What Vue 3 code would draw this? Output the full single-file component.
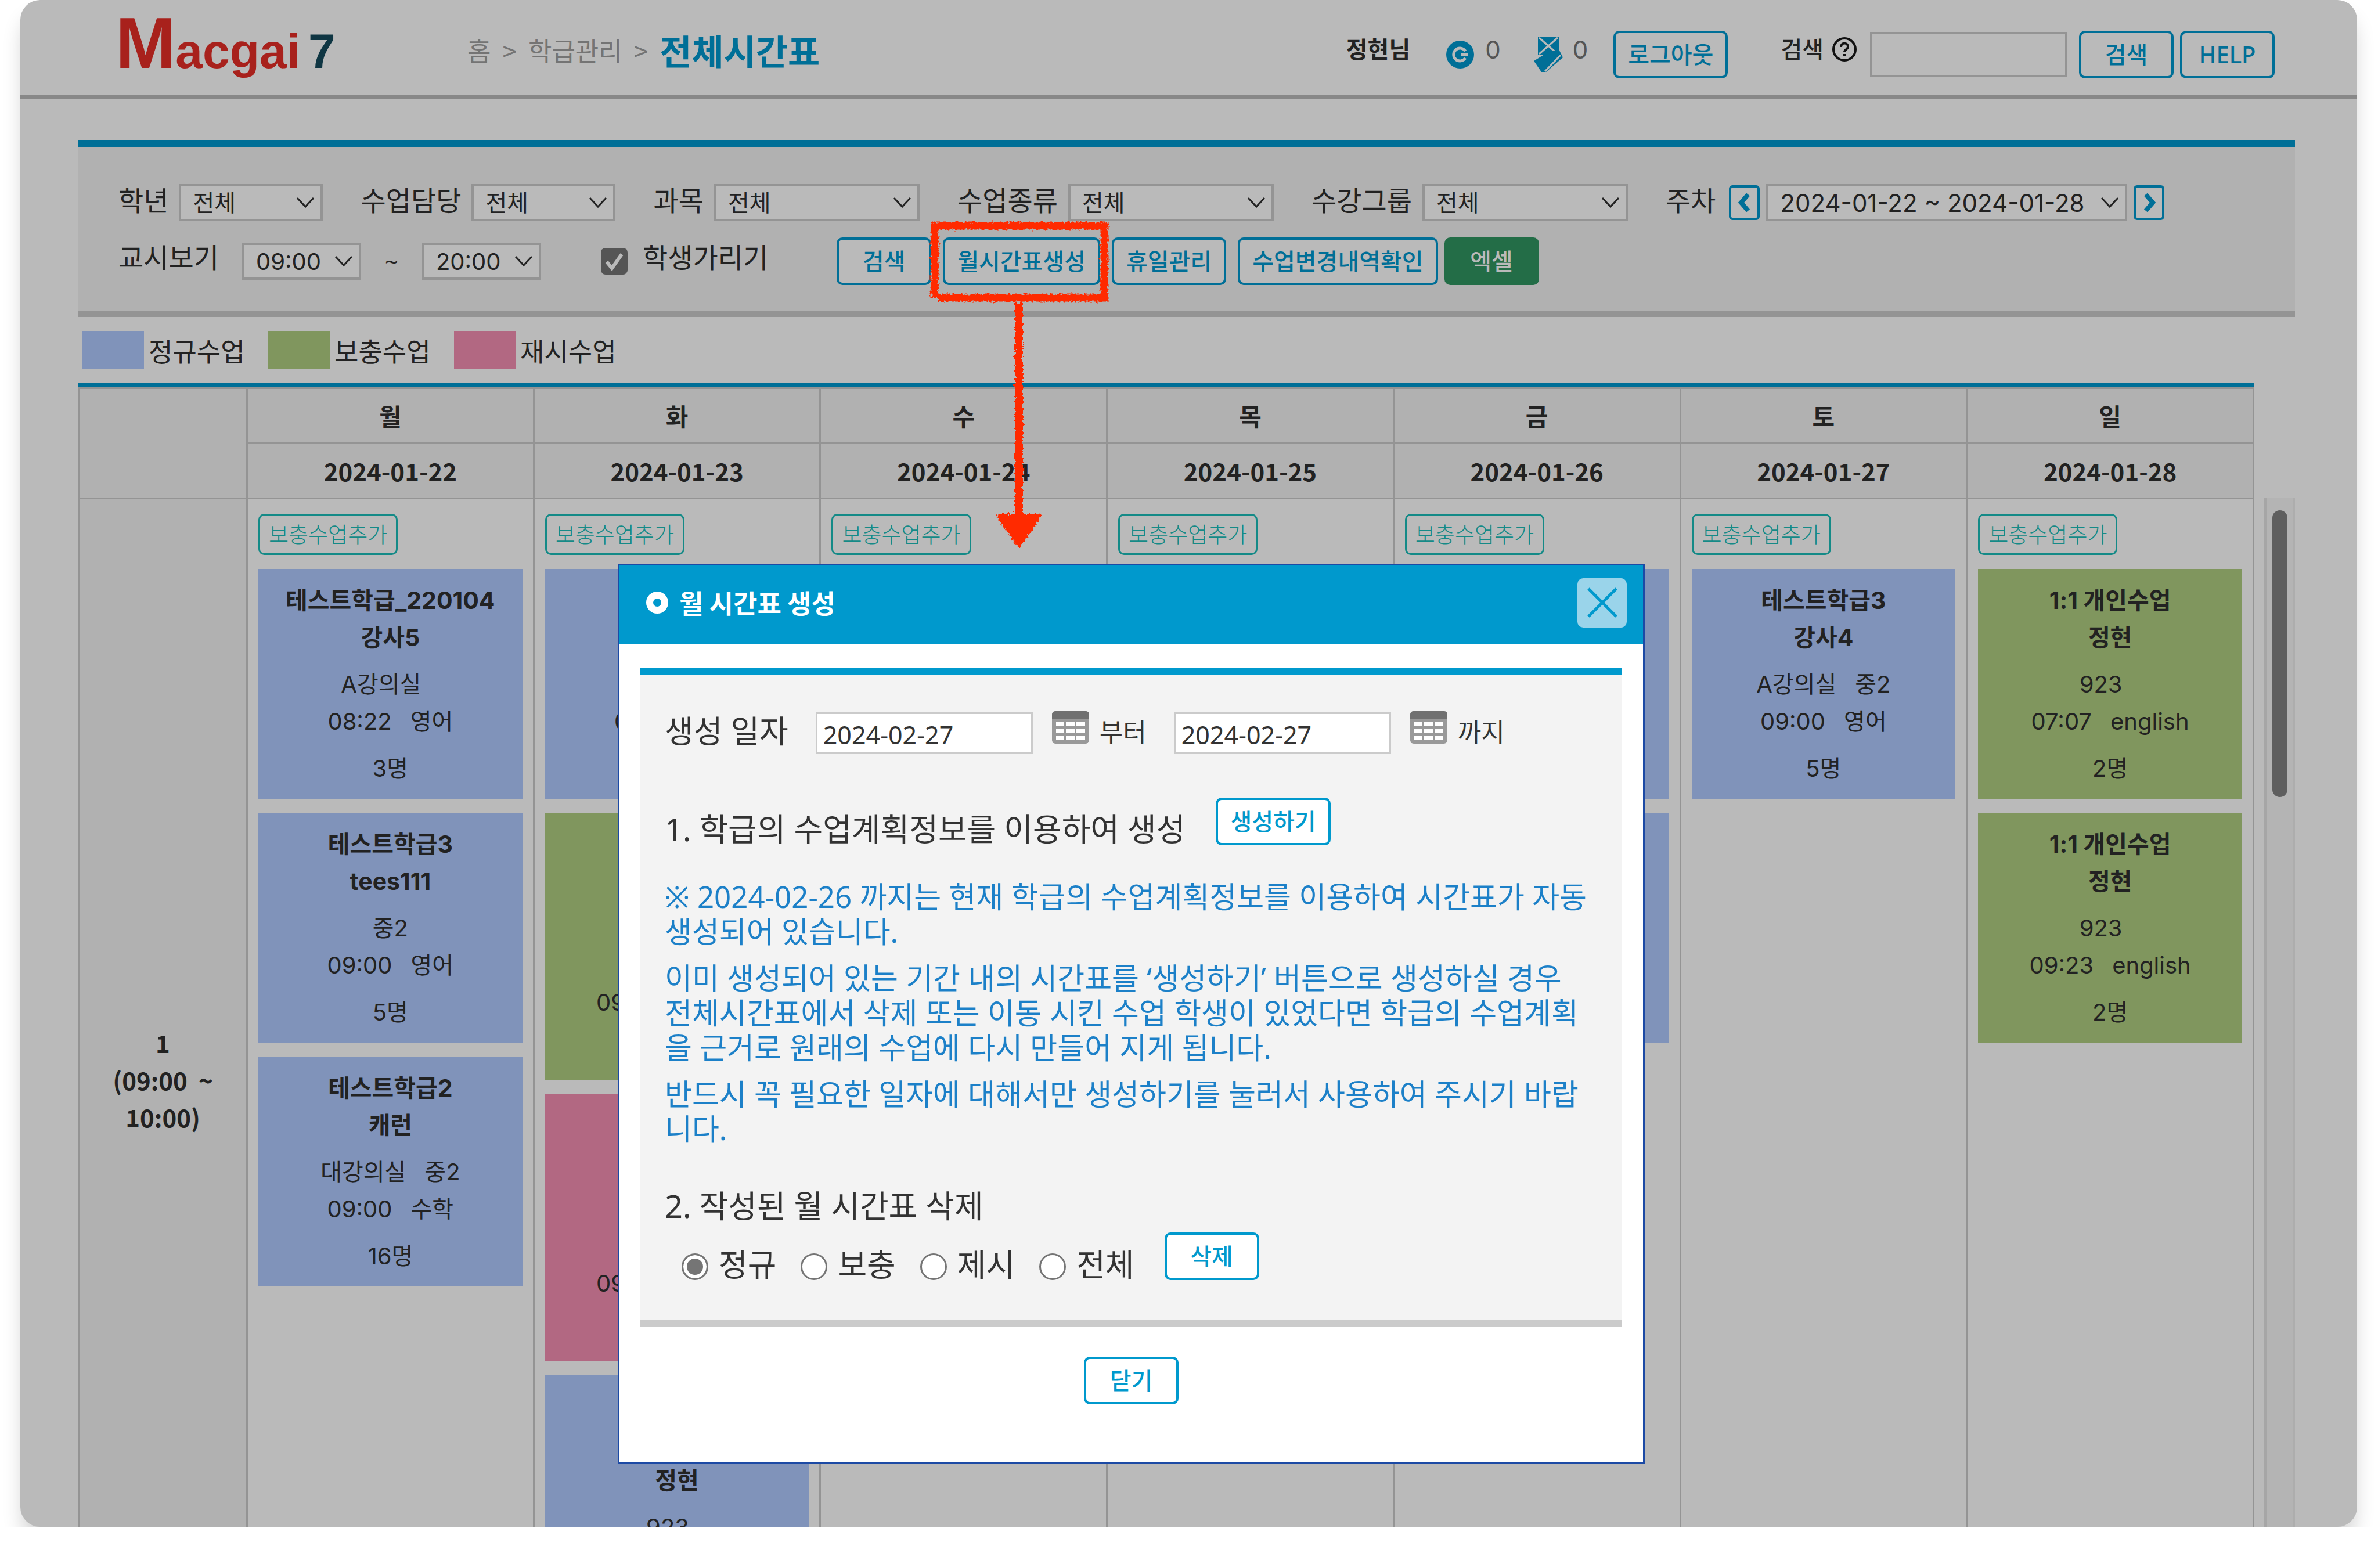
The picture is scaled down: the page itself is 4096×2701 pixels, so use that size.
<script setup>
import { ref } from 'vue'

const selects = [
  { id: 'grade', label: '학년', size: 'narrow' },
  { id: 'teacher', label: '수업담당', size: 'narrow' },
  { id: 'subject', label: '과목', size: 'wide' },
  { id: 'kind', label: '수업종류', size: 'wide' },
  { id: 'group', label: '수강그룹', size: 'wide' },
]

const hideStudents = ref(true)
const fromDate = ref('2024-02-27')
const toDate = ref('2024-02-27')
const removeType = ref('정규')
const removeTypes = ['정규', '보충', '제시', '전체']

const legend = [
  { name: '정규수업', tone: 'regular' },
  { name: '보충수업', tone: 'extra' },
  { name: '재시수업', tone: 'retest' },
]

const lesson = (tone, title, room, grade, time, subject, count) => ({ tone, title, room, grade, time, subject, count })

const days = [
  {
    name: '월',
    date: '2024-01-22',
    lessons: [
      lesson('regular', ['테스트학급_220104', '강사5'], 'A강의실', '', '08:22', '영어', '3명'),
      lesson('regular', ['테스트학급3', 'tees111'], '중2', null, '09:00', '영어', '5명'),
      lesson('regular', ['테스트학급2', '캐런'], '대강의실', '중2', '09:00', '수학', '16명'),
    ],
  },
  {
    name: '화',
    date: '2024-01-23',
    lessons: [
      lesson('regular', ['학급5', '강사5'], '중2', null, '08:22', '영어', '3명'),
      lesson('extra', ['개인', '수업', '정현'], '923', '', '09:23', 'english', '2명'),
      lesson('retest', ['개인', '수업', '정현'], '923', '', '09:23', 'english', '2명'),
      lesson('regular', ['개인', '수업', '정현'], '923', '', '09:23', 'english', '2명'),
    ],
  },
  { name: '수', date: '2024-01-24', lessons: [] },
  { name: '목', date: '2024-01-25', lessons: [] },
  {
    name: '금',
    date: '2024-01-26',
    lessons: [
      lesson('regular', ['학급3', '강사4'], '중2', null, '09:00', '영어', '5명'),
      lesson('regular', ['학급2', '캐런'], '중2', null, '09:00', '수학', '5명'),
    ],
  },
  {
    name: '토',
    date: '2024-01-27',
    lessons: [lesson('regular', ['테스트학급3', '강사4'], 'A강의실', '중2', '09:00', '영어', '5명')],
  },
  {
    name: '일',
    date: '2024-01-28',
    lessons: [
      lesson('extra', ['1:1 개인수업', '정현'], '923', '', '07:07', 'english', '2명'),
      lesson('extra', ['1:1 개인수업', '정현'], '923', '', '09:23', 'english', '2명'),
    ],
  },
]
</script>

<template>
  <div class="frame">
    <header class="top">
      <a class="logo" href="#"><span class="logo-m">M</span><span class="logo-rest">acgai</span><span class="logo-num">7</span></a>
      <nav class="crumbs">
        <a href="#">홈</a><span>&gt;</span><a href="#">학급관리</a><span>&gt;</span>
        <h1>전체시간표</h1>
      </nav>
      <div class="account">
        <strong class="user">정현님</strong>
        <span class="coin">
          <svg width="50" height="50" viewBox="0 0 50 50">
            <circle cx="25" cy="25" r="24" fill="#006f97" />
            <path d="M34 19a11 11 0 1 0 0 12" fill="none" stroke="#bababa" stroke-width="5" />
            <path d="M27 25h11" stroke="#bababa" stroke-width="4" />
          </svg>
          <span>0</span>
        </span>
        <span class="coin pen">
          <svg width="52" height="62" viewBox="0 0 52 62">
            <path d="M8 1h36v30H8z" fill="#006f97" />
            <path d="M10 2l32 28M42 2L10 30" stroke="#bababa" stroke-width="3" />
            <path d="M1 42L30 24h15l6 12L22 61h-8z" fill="#006f97" />
            <path d="M20 60L47 32" stroke="#bababa" stroke-width="3" />
          </svg>
          <span>0</span>
        </span>
        <button class="btn" type="button">로그아웃</button>
        <label class="find" for="find">검색
          <svg width="44" height="44" viewBox="0 0 44 44" fill="none" stroke="#111" stroke-width="4">
            <circle cx="22" cy="22" r="19" />
            <path d="M16 18c0-9 13-8 12 0-1 5-6 4-6 9" />
            <path d="M22 30v4" />
          </svg>
        </label>
        <input id="find" class="find-box" type="text" />
        <button class="btn square" type="button">검색</button>
        <button class="btn square help" type="button">HELP</button>
      </div>
    </header>

    <main class="content">
      <form class="filters" @submit.prevent>
        <div class="row first">
          <div v-for="s in selects" :key="s.id" class="field">
            <label :for="s.id">{{ s.label }}</label>
            <span class="pick" :class="s.size">
              <select :id="s.id"><option>전체</option></select>
              <svg viewBox="0 0 32 20"><path d="M2 2l14 15L30 2" /></svg>
            </span>
          </div>
          <div class="field week">
            <label for="week">주차</label>
            <button class="step" type="button" aria-label="이전 주">
              <svg viewBox="0 0 24 36"><path d="M18 4L6 18l12 14" /></svg>
            </button>
            <span class="pick range">
              <select id="week"><option>2024-01-22 ~ 2024-01-28</option></select>
              <svg viewBox="0 0 32 20"><path d="M2 2l14 15L30 2" /></svg>
            </span>
            <button class="step" type="button" aria-label="다음 주">
              <svg viewBox="0 0 24 36"><path d="M6 4l12 14L6 32" /></svg>
            </button>
          </div>
        </div>
        <div class="row second">
          <label class="period" for="from">교시보기</label>
          <span class="pick hour">
            <select id="from"><option>09:00</option></select>
            <svg viewBox="0 0 32 20"><path d="M2 2l14 15L30 2" /></svg>
          </span>
          <span class="tilde">~</span>
          <span class="pick hour">
            <select id="to" aria-label="종료 교시"><option>20:00</option></select>
            <svg viewBox="0 0 32 20"><path d="M2 2l14 15L30 2" /></svg>
          </span>
          <span class="tick">
            <input id="hide" v-model="hideStudents" type="checkbox" />
            <svg viewBox="0 0 46 46"><path d="M10 24l9 11L36 11" /></svg>
          </span>
          <label class="hide-label" for="hide">학생가리기</label>
          <div class="actions">
            <button class="btn square" type="button">검색</button>
            <span class="marked">
              <button class="btn" type="button">월시간표생성</button>
              <svg class="marker" width="320" height="570" viewBox="0 0 320 570">
                <filter id="crayon" x="-10%" y="-5%" width="120%" height="110%">
                  <feTurbulence type="fractalNoise" baseFrequency="0.22" numOctaves="3" seed="4" />
                  <feDisplacementMap in="SourceGraphic" scale="9" xChannelSelector="R" yChannelSelector="G" />
                </filter>
                <g filter="url(#crayon)" fill="none" stroke="#ff2b00">
                  <path d="M15 138V14H307V138H20" stroke-width="13" />
                  <path d="M160 147V520" stroke-width="14" />
                  <path d="M126 514h68l-34 50z" fill="#ff2b00" stroke-width="8" stroke-linejoin="round" />
                </g>
              </svg>
            </span>
            <button class="btn" type="button">휴일관리</button>
            <button class="btn" type="button">수업변경내역확인</button>
            <button class="btn square excel" type="button">엑셀</button>
          </div>
        </div>
      </form>

      <ul class="legend">
        <li v-for="l in legend" :key="l.name"><i :class="l.tone"></i>{{ l.name }}</li>
      </ul>

      <div class="board">
        <div class="sheet">
          <table>
            <colgroup>
              <col class="time-col" />
              <col v-for="d in days" :key="d.name" />
            </colgroup>
            <thead>
              <tr>
                <th rowspan="2"></th>
                <th v-for="d in days" :key="d.name">{{ d.name }}</th>
              </tr>
              <tr>
                <th v-for="d in days" :key="d.date">{{ d.date }}</th>
              </tr>
            </thead>
            <tbody>
              <tr>
                <th class="time">1<br />(09:00 &nbsp;~<br />10:00)</th>
                <td v-for="d in days" :key="d.name">
                  <button class="add" type="button">보충수업추가</button>
                  <article v-for="(c, i) in d.lessons" :key="i" class="card" :class="c.tone">
                    <h3><span v-for="t in c.title" :key="t">{{ t }}</span></h3>
                    <p><span>{{ c.room }}</span><span v-if="c.grade !== null">{{ c.grade }}</span></p>
                    <p><span>{{ c.time }}</span><span>{{ c.subject }}</span></p>
                    <p class="count">{{ c.count }}</p>
                  </article>
                </td>
              </tr>
            </tbody>
          </table>
        </div>
        <div class="scroll"><div class="track"><div class="thumb"></div></div></div>
      </div>
    </main>

    <section class="modal" role="dialog" aria-labelledby="modal-title">
      <header class="modal-head">
        <i class="dot"></i>
        <h2 id="modal-title">월 시간표 생성</h2>
        <button class="close" type="button" aria-label="닫기">
          <svg width="52" height="52" viewBox="0 0 52 52"><path d="M2 2l48 48M50 2L2 50" /></svg>
        </button>
      </header>
      <div class="panel">
        <div class="dates">
          <label class="big" for="date-from">생성 일자</label>
          <input id="date-from" v-model="fromDate" type="text" />
          <svg class="cal" width="64" height="58" viewBox="0 0 64 58">
            <rect x="0" y="1" width="64" height="56" rx="6" fill="#999" />
            <path d="M0 14V7q0-6 6-6h52q6 0 6 6v7z" fill="#707070" />
            <path d="M7 20h14v7H7zM24 20h15v7H24zM42 20h15v7H42zM7 31h14v8H7zM24 31h15v8H24zM42 31h15v8H42zM7 43h14v8H7zM24 43h15v8H24zM42 43h15v8H42z" fill="#fff" />
          </svg>
          <span class="word">부터</span>
          <input v-model="toDate" type="text" aria-label="종료 일자" />
          <svg class="cal" width="64" height="58" viewBox="0 0 64 58">
            <rect x="0" y="1" width="64" height="56" rx="6" fill="#999" />
            <path d="M0 14V7q0-6 6-6h52q6 0 6 6v7z" fill="#707070" />
            <path d="M7 20h14v7H7zM24 20h15v7H24zM42 20h15v7H42zM7 31h14v8H7zM24 31h15v8H24zM42 31h15v8H42zM7 43h14v8H7zM24 43h15v8H24zM42 43h15v8H42z" fill="#fff" />
          </svg>
          <span class="word">까지</span>
        </div>
        <div class="make">
          <h3>1. 학급의 수업계획정보를 이용하여 생성</h3>
          <button class="btn bright" type="button">생성하기</button>
        </div>
        <div class="notes">
          <p>※ 2024-02-26 까지는 현재 학급의 수업계획정보를 이용하여 시간표가 자동<br />생성되어 있습니다.</p>
          <p>이미 생성되어 있는 기간 내의 시간표를 ‘생성하기’ 버튼으로 생성하실 경우<br />전체시간표에서 삭제 또는 이동 시킨 수업 학생이 있었다면 학급의 수업계획<br />을 근거로 원래의 수업에 다시 만들어 지게 됩니다.</p>
          <p>반드시 꼭 필요한 일자에 대해서만 생성하기를 눌러서 사용하여 주시기 바랍<br />니다.</p>
        </div>
        <h3 class="second-title">2. 작성된 월 시간표 삭제</h3>
        <div class="remove">
          <label v-for="t in removeTypes" :key="t">
            <input v-model="removeType" type="radio" name="remove" :value="t" />{{ t }}
          </label>
          <button class="btn square bright" type="button">삭제</button>
        </div>
      </div>
      <footer class="modal-foot"><button class="btn square bright" type="button">닫기</button></footer>
    </section>
  </div>
</template>

<style>
body {
  background: #fff;
}
</style>

<style scoped>
* {
  box-sizing: border-box;
  margin: 0;
  padding: 0;
}
.frame {
  position: relative;
  height: calc(100vh - 71px);
  margin: 0 36px 0 35px;
  overflow: hidden;
  border-radius: 34px;
  background: #bababa;
  box-shadow: 0 26px 36px -6px rgba(0, 0, 0, 0.2);
  color: #222;
  font-family: "Noto Sans", "Noto Sans CJK KR", sans-serif;
  font-size: 40px;
}
button,
input,
select {
  font: inherit;
  color: inherit;
}
a {
  color: inherit;
  text-decoration: none;
}

/* header */
.top {
  display: flex;
  align-items: center;
  height: 171px;
  padding: 25px 142px 0 164px;
  border-bottom: 8px solid #888;
}
.logo {
  flex: 0 0 606px;
  display: flex;
  align-items: baseline;
  margin-top: -27px;
  color: #a8211c;
  font-family: "Liberation Sans", sans-serif;
  font-weight: 700;
  line-height: 100px;
}
.logo-m {
  font-size: 124px;
}
.logo-rest,
.logo-num {
  font-size: 84px;
}
.logo-num {
  margin-left: 14px;
  color: #0f3643;
}
.crumbs {
  display: flex;
  align-items: center;
  gap: 20px;
  margin-bottom: 16px;
  color: #747474;
  font-family: "Noto Sans CJK KR", sans-serif;
  font-size: 44px;
  font-weight: 400;
  line-height: 60px;
}
.crumbs h1 {
  color: #006f97;
  font-size: 60px;
  font-weight: 700;
}
.account {
  display: flex;
  align-items: center;
  margin-left: auto;
}
.user,
.find {
  font-weight: 700;
  line-height: 48px;
  margin-bottom: 18px;
}
.user {
  margin-right: 61px;
}
.find {
  font-weight: 500;
}
.coin {
  display: flex;
  align-items: center;
  gap: 18px;
  margin-right: 56px;
}
.coin span {
  margin-bottom: 18px;
  color: #555;
  font-family: Inter, sans-serif;
  font-size: 42px;
}
.coin.pen {
  gap: 16px;
  margin-right: 44px;
}
.btn {
  flex: none;
  height: 82px;
  padding: 0 21px;
  border: 4px solid #006f97;
  border-radius: 10px;
  background: #bababa;
  color: #006f97;
  font-weight: 500;
  line-height: 48px;
  white-space: nowrap;
}
.btn.square {
  width: 163px;
  padding: 0;
}
.find {
  display: flex;
  align-items: center;
  gap: 14px;
  margin-left: 91px;
}
.find-box {
  width: 340px;
  height: 78px;
  margin: 0 20px 0 22px;
  border: 4px solid #949494;
  background: transparent;
}
.btn.help {
  margin-left: 11px;
}

/* filters */
.content {
  padding: 71px 107px 0 99px;
}
.filters {
  padding: 64px 68px 44px 70px;
  border-top: 11px solid #006f97;
  border-bottom: 11px solid #949494;
  background: #b1b1b1;
}
.row {
  display: flex;
  align-items: center;
}
.row label {
  font-size: 47px;
  line-height: 56px;
}
.first {
  gap: 65px;
}
.field {
  display: flex;
  align-items: center;
  gap: 18px;
}
.field > label {
  margin-bottom: 8px;
}
.field.week {
  gap: 11px;
}
.week > label {
  margin-right: 12px;
}
.pick {
  position: relative;
  display: block;
  height: 64px;
}
.pick select {
  width: 100%;
  height: 100%;
  padding: 0 20px;
  border: 4px solid #949494;
  border-radius: 0;
  background: #bababa;
  font-family: Inter, "Noto Sans CJK KR", sans-serif;
  appearance: none;
}
.pick svg {
  position: absolute;
  right: 14px;
  top: 22px;
  width: 32px;
  height: 20px;
  fill: none;
  stroke: #222;
  stroke-width: 3;
}
.narrow {
  width: 248px;
}
.wide {
  width: 354px;
}
.range {
  width: 622px;
}
.range select {
  font-size: 42px;
}
.hour {
  width: 205px;
}
.step {
  width: 53px;
  height: 60px;
  border: 4px solid #006f97;
  border-radius: 6px;
  background: #bababa;
}
.step svg {
  display: block;
  width: 24px;
  height: 36px;
  margin: 0 auto;
  fill: none;
  stroke: #006f97;
  stroke-width: 8;
}
.second {
  margin-top: 28px;
}
.second > label {
  margin-bottom: 14px;
}
.period {
  margin-right: 40px;
}
.tilde {
  width: 105px;
  text-align: center;
}
.tick {
  position: relative;
  width: 46px;
  height: 46px;
  margin: 0 26px 0 103px;
}
.tick input {
  display: block;
  width: 46px;
  height: 46px;
  border-radius: 8px;
  background: #555;
  appearance: none;
}
.tick svg {
  position: absolute;
  inset: 0;
  fill: none;
  stroke: #bababa;
  stroke-width: 6;
  pointer-events: none;
}
.actions {
  display: flex;
  gap: 20px;
  margin-left: 118px;
}
.marked {
  position: relative;
}
.marker {
  position: absolute;
  left: -29px;
  top: -34px;
  z-index: 2;
  pointer-events: none;
}
.btn.excel {
  margin-left: -9px;
  border-color: #236d47;
  background: #236d47;
  color: #bababa;
}

/* legend */
.legend {
  display: flex;
  padding: 25px 0 24px 8px;
  list-style: none;
  font-size: 45px;
}
.legend li {
  display: flex;
  align-items: center;
  gap: 8px;
  width: 320px;
  height: 64px;
}
.legend i {
  width: 106px;
  height: 64px;
}
.regular {
  background: #8093ba;
}
.extra {
  background: #80965e;
}
.retest {
  background: #b26882;
}

/* timetable */
.board {
  display: flex;
}
.sheet {
  flex: 1;
  border-top: 8px solid #006f97;
}
table {
  width: 100%;
  border-collapse: collapse;
  table-layout: fixed;
}
.time-col {
  width: 290px;
}
th,
td {
  border: 3px solid #949494;
}
th {
  height: 95px;
  background: #b1b1b1;
  font-family: "Noto Sans CJK KR", sans-serif;
  font-size: 42px;
  font-weight: 700;
  line-height: 64px;
}
td {
  padding: 25px 18px 31px;
  vertical-align: top;
}
.add {
  display: block;
  height: 71px;
  padding: 0 15px;
  border: 3px solid #148a87;
  border-radius: 10px;
  background: transparent;
  color: #148a87;
  font-size: 37px;
  font-weight: 300;
  line-height: 48px;
}
.card {
  margin-top: 25px;
  padding: 21px 0 20px;
  font-family: Inter, "Noto Sans CJK KR", sans-serif;
  font-size: 40px;
  line-height: 64px;
  text-align: center;
}
.card h3 {
  margin-bottom: 17px;
  font-size: 41px;
  font-weight: 700;
}
.card h3 span {
  display: block;
}
.card p {
  display: flex;
  justify-content: center;
  gap: 32px;
  height: 64px;
}
.card .count {
  margin-top: 17px;
}
.scroll {
  display: flex;
  padding: 199px 0 0 17px;
}
.track {
  width: 53px;
  padding: 21px 0 0 10px;
  border-left: 4px solid #a6a6a6;
  border-right: 3px solid #adadad;
  background: #b4b4b4;
}
.thumb {
  width: 26px;
  height: 494px;
  border-radius: 13px;
  background: #5e5e5e;
}

/* modal */
.modal {
  position: absolute;
  left: 1029px;
  top: 971px;
  z-index: 3;
  width: min(1769px, 100%);
  border: 3px solid #1c4aa5;
  background: #fff;
  color: #333;
}
.modal-head {
  display: flex;
  align-items: center;
  height: 135px;
  padding: 0 28px 7px 46px;
  background: #0099cd;
  color: #fff;
}
.dot {
  width: 38px;
  height: 38px;
  border: 12px solid #fff;
  border-radius: 50%;
}
.modal-head h2 {
  margin-left: 19px;
  font-family: "Noto Sans CJK KR", sans-serif;
  font-size: 45px;
  font-weight: 700;
  line-height: 60px;
}
.close {
  width: 85px;
  height: 85px;
  margin-left: auto;
  border: 0;
  border-radius: 10px;
  background: #9ad4ea;
}
.close svg {
  display: block;
  margin: 0 auto;
  fill: none;
  stroke: #0099cd;
  stroke-width: 5;
}
.panel {
  margin: 42px 36px 0;
  padding: 65px 38px 69px 42px;
  border-top: 11px solid #0099cd;
  border-bottom: 11px solid #cbcbcb;
  background: #f3f3f3;
}
.dates {
  display: flex;
  align-items: center;
  height: 72px;
}
.big,
.panel h3,
.remove label {
  font-size: 54px;
  font-weight: 400;
}
.big {
  margin: 0 47px 8px 0;
  line-height: 60px;
}
.dates input {
  width: 374px;
  height: 72px;
  padding: 4px 10px 0;
  border: 3px solid #cbcbcb;
  background: #fff;
  font-size: 43px;
}
.cal {
  margin: 0 18px 20px 33px;
}
.word {
  margin-right: 47px;
  padding-bottom: 4px;
  font-size: 44px;
  line-height: 60px;
}
.make {
  display: flex;
  margin-top: 75px;
}
.make h3 {
  margin-right: 53px;
  line-height: 108px;
}
.btn.bright {
  border-color: #0099cd;
  background: #fff;
  color: #0099cd;
}
.notes {
  margin-top: 32px;
  color: #1c80c8;
  font-size: 51px;
  line-height: 60px;
  white-space: nowrap;
}
.notes p {
  margin-bottom: 20px;
}
.panel .second-title {
  margin-top: 73px;
  line-height: 60px;
}
.remove {
  display: flex;
  align-items: flex-end;
  gap: 42px;
  margin-top: 16px;
  padding-left: 29px;
}
.remove label {
  display: flex;
  align-items: center;
  gap: 18px;
  line-height: 54px;
}
.remove input {
  width: 46px;
  height: 46px;
  margin-top: 8px;
  border: 3px solid #757575;
  border-radius: 50%;
  background: #fff;
  appearance: none;
}
.remove input:checked {
  border-color: #757575;
  background: #757575;
  box-shadow: inset 0 0 0 6px #fff;
}
.remove .btn {
  margin-left: 10px;
}
.modal-foot {
  padding: 52px 0 100px;
  text-align: center;
}
.modal-foot .btn {
  display: block;
  margin: 0 auto;
}
</style>
